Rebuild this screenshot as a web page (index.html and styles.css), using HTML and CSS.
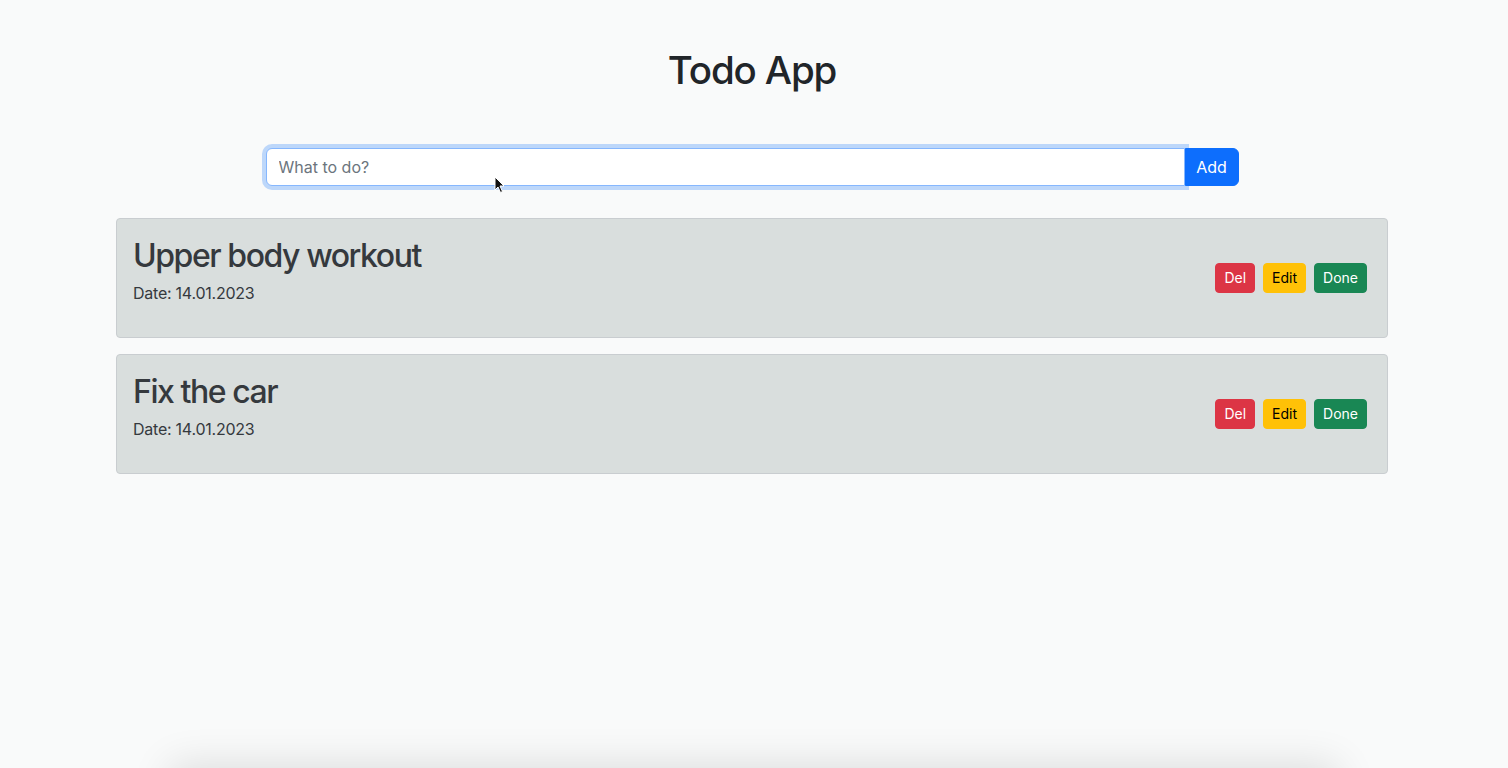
FILE: index.html
```html
<!DOCTYPE html>
<html lang="en">
<head>
<meta charset="utf-8">
<title>Todo App</title>
<link rel="stylesheet" href="styles.css">
</head>
<body>
<div class="app">
  <h1 class="title">Todo App</h1>
  <form class="add-form">
    <div class="input-group">
      <input class="todo-input" type="text" placeholder="What to do?">
      <button class="btn btn-primary" type="button">Add</button>
    </div>
  </form>
  <div class="list">
    <div class="todo-card">
      <div class="todo-text">
        <h2 class="todo-title">Upper body workout</h2>
        <p class="todo-date">Date: 14.01.2023</p>
      </div>
      <div class="actions">
        <button class="btn btn-sm btn-danger" type="button">Del</button>
        <button class="btn btn-sm btn-warning" type="button">Edit</button>
        <button class="btn btn-sm btn-success" type="button">Done</button>
      </div>
    </div>
    <div class="todo-card">
      <div class="todo-text">
        <h2 class="todo-title">Fix the car</h2>
        <p class="todo-date">Date: 14.01.2023</p>
      </div>
      <div class="actions">
        <button class="btn btn-sm btn-danger" type="button">Del</button>
        <button class="btn btn-sm btn-warning" type="button">Edit</button>
        <button class="btn btn-sm btn-success" type="button">Done</button>
      </div>
    </div>
  </div>
</div>
<svg class="cursor" width="12" height="18" viewBox="0 0 12 18"><path d="M1 1 L1 14 L4 11 L6.5 16.5 L8.5 15.5 L6 10 L10 10 Z" fill="#111" stroke="#fff" stroke-width="1"/></svg>
<div class="bottom-shadow"></div>
</body>
</html>
```

FILE: styles.css
```css
* { box-sizing: border-box; }
html, body { margin: 0; padding: 0; height: 100%; overflow: hidden; }
body {
  background: #f9fafa;
  font-family: Inter, "Noto Sans", "Liberation Sans", sans-serif;
  color: #212529;
  position: relative;
}
.app {
  width: 1272px;
  margin: 0 auto;
  padding-top: 46px;
  position: relative;
  left: -2px;
}
.title {
  margin: 0;
  text-align: center;
  font-size: 38.5px;
  font-weight: 500;
  line-height: 48px;
  letter-spacing: -0.03em;
  color: #212529;
}
.add-form {
  margin-top: 54px;
  display: flex;
  justify-content: center;
}
.input-group {
  display: flex;
  width: 973px;
  margin-left: 0;
}
.todo-input {
  flex: 1;
  height: 38px;
  padding: 6px 12px;
  font: inherit;
  font-size: 16px;
  color: #212529;
  background: #fff;
  border: 1px solid #86b7fe;
  border-radius: 6px 0 0 6px;
  box-shadow: 0 0 0 4px rgba(13,110,253,.25);
  outline: none;
}
.todo-input::placeholder { color: #6c757d; }
.btn {
  font-family: inherit;
  font-size: 16px;
  line-height: 24px;
  padding: 6px 12px;
  border: 1px solid transparent;
  border-radius: 6px;
  cursor: pointer;
}
.btn-primary {
  background: #0d6efd;
  border-color: #0d6efd;
  color: #fff;
  border-radius: 0 6px 6px 0;
  height: 38px;
  width: 54px;
  padding: 6px 0;
  text-align: center;
}
.list {
  margin-top: 32px;
  display: flex;
  flex-direction: column;
  gap: 16px;
}
.todo-card {
  height: 120px;
  background: #d9dedd;
  border: 1px solid #c9cdd0;
  border-radius: 4px;
  display: flex;
  align-items: center;
  justify-content: space-between;
  padding: 18px 20px 16px 16px;
}
.todo-text { align-self: flex-start; }
.todo-title {
  margin: 0 0 6px;
  font-size: 32px;
  font-weight: 500;
  line-height: 38px;
  letter-spacing: -0.045em;
  color: #35393d;
}
.todo-date {
  margin: 0;
  font-size: 16px;
  line-height: 24px;
  letter-spacing: -0.015em;
  color: #35393d;
}
.actions {
  display: flex;
  gap: 8px;
  margin-top: -3px;
}
.btn-sm {
  font-size: 14px;
  line-height: 20px;
  padding: 4px 8px;
  border-radius: 4px;
}
.btn-danger { background: #dc3545; border-color: #dc3545; color: #fff; }
.btn-warning { background: #ffc107; border-color: #ffc107; color: #000; }
.btn-success { background: #198754; border-color: #198754; color: #fff; }
.cursor {
  position: absolute;
  left: 494px;
  top: 176px;
}
.bottom-shadow {
  position: absolute;
  left: 180px;
  width: 1148px;
  top: 775px;
  height: 60px;
  background: #fff;
  box-shadow: 0 0 40px 10px rgba(0,0,0,.12);
}
```
